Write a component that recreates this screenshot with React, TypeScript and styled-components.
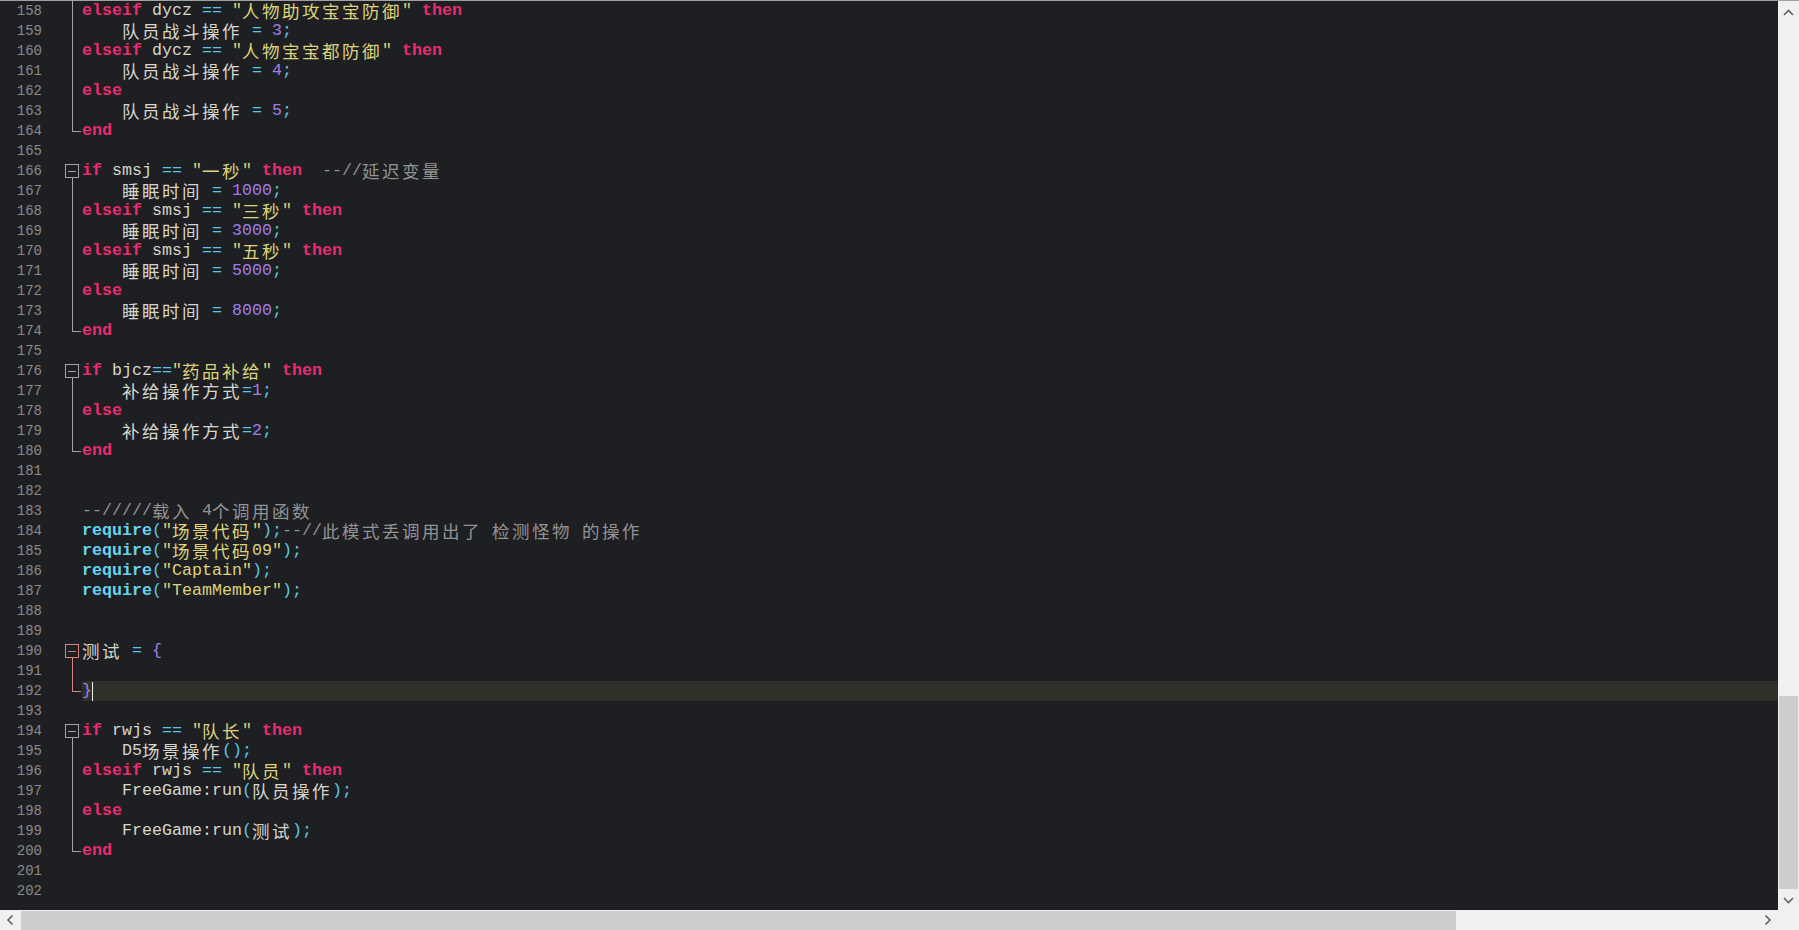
import React from "react";
import styled, { createGlobalStyle, css } from "styled-components";

type Kind = "kw" | "id" | "op" | "num" | "str" | "cm" | "fn" | "br";
type Tok = [Kind, string];
type Fold = "none" | "start" | "mid" | "end";

interface line {
    n: number,
    fold: Fold,
    red?: boolean,
    active?: boolean,
    toks: Tok[],
}

const colors: Record<Kind, string> = {
    kw: "#ec2a6d",
    id: "#d6d6cc",
    op: "#59c7e3",
    num: "#a07ee8",
    str: "#ddd37c",
    cm: "#939393",
    fn: "#66d3ef",
    br: "#9b7ee6",
};

const lines: line[] = [
    { n: 158, fold: "mid", toks: [["kw", "elseif"], ["id", " dycz "], ["op", "=="], ["id", " "], ["str", "\"人物助攻宝宝防御\""], ["id", " "], ["kw", "then"]] },
    { n: 159, fold: "mid", toks: [["id", "    队员战斗操作 "], ["op", "="], ["id", " "], ["num", "3"], ["op", ";"]] },
    { n: 160, fold: "mid", toks: [["kw", "elseif"], ["id", " dycz "], ["op", "=="], ["id", " "], ["str", "\"人物宝宝都防御\""], ["id", " "], ["kw", "then"]] },
    { n: 161, fold: "mid", toks: [["id", "    队员战斗操作 "], ["op", "="], ["id", " "], ["num", "4"], ["op", ";"]] },
    { n: 162, fold: "mid", toks: [["kw", "else"]] },
    { n: 163, fold: "mid", toks: [["id", "    队员战斗操作 "], ["op", "="], ["id", " "], ["num", "5"], ["op", ";"]] },
    { n: 164, fold: "end", toks: [["kw", "end"]] },
    { n: 165, fold: "none", toks: [] },
    { n: 166, fold: "start", toks: [["kw", "if"], ["id", " smsj "], ["op", "=="], ["id", " "], ["str", "\"一秒\""], ["id", " "], ["kw", "then"], ["id", "  "], ["cm", "--//延迟变量"]] },
    { n: 167, fold: "mid", toks: [["id", "    睡眠时间 "], ["op", "="], ["id", " "], ["num", "1000"], ["op", ";"]] },
    { n: 168, fold: "mid", toks: [["kw", "elseif"], ["id", " smsj "], ["op", "=="], ["id", " "], ["str", "\"三秒\""], ["id", " "], ["kw", "then"]] },
    { n: 169, fold: "mid", toks: [["id", "    睡眠时间 "], ["op", "="], ["id", " "], ["num", "3000"], ["op", ";"]] },
    { n: 170, fold: "mid", toks: [["kw", "elseif"], ["id", " smsj "], ["op", "=="], ["id", " "], ["str", "\"五秒\""], ["id", " "], ["kw", "then"]] },
    { n: 171, fold: "mid", toks: [["id", "    睡眠时间 "], ["op", "="], ["id", " "], ["num", "5000"], ["op", ";"]] },
    { n: 172, fold: "mid", toks: [["kw", "else"]] },
    { n: 173, fold: "mid", toks: [["id", "    睡眠时间 "], ["op", "="], ["id", " "], ["num", "8000"], ["op", ";"]] },
    { n: 174, fold: "end", toks: [["kw", "end"]] },
    { n: 175, fold: "none", toks: [] },
    { n: 176, fold: "start", toks: [["kw", "if"], ["id", " bjcz"], ["op", "=="], ["str", "\"药品补给\""], ["id", " "], ["kw", "then"]] },
    { n: 177, fold: "mid", toks: [["id", "    补给操作方式"], ["op", "="], ["num", "1"], ["op", ";"]] },
    { n: 178, fold: "mid", toks: [["kw", "else"]] },
    { n: 179, fold: "mid", toks: [["id", "    补给操作方式"], ["op", "="], ["num", "2"], ["op", ";"]] },
    { n: 180, fold: "end", toks: [["kw", "end"]] },
    { n: 181, fold: "none", toks: [] },
    { n: 182, fold: "none", toks: [] },
    { n: 183, fold: "none", toks: [["cm", "--/////载入 4个调用函数"]] },
    { n: 184, fold: "none", toks: [["fn", "require"], ["op", "("], ["str", "\"场景代码\""], ["op", ");"], ["cm", "--//此模式丢调用出了 检测怪物 的操作"]] },
    { n: 185, fold: "none", toks: [["fn", "require"], ["op", "("], ["str", "\"场景代码09\""], ["op", ");"]] },
    { n: 186, fold: "none", toks: [["fn", "require"], ["op", "("], ["str", "\"Captain\""], ["op", ");"]] },
    { n: 187, fold: "none", toks: [["fn", "require"], ["op", "("], ["str", "\"TeamMember\""], ["op", ");"]] },
    { n: 188, fold: "none", toks: [] },
    { n: 189, fold: "none", toks: [] },
    { n: 190, fold: "start", red: true, toks: [["id", "测试 "], ["op", "="], ["id", " "], ["br", "{"]] },
    { n: 191, fold: "mid", red: true, toks: [] },
    { n: 192, fold: "end", red: true, active: true, toks: [["br", "}"]] },
    { n: 193, fold: "none", toks: [] },
    { n: 194, fold: "start", toks: [["kw", "if"], ["id", " rwjs "], ["op", "=="], ["id", " "], ["str", "\"队长\""], ["id", " "], ["kw", "then"]] },
    { n: 195, fold: "mid", toks: [["id", "    D5场景操作"], ["op", "();"]] },
    { n: 196, fold: "mid", toks: [["kw", "elseif"], ["id", " rwjs "], ["op", "=="], ["id", " "], ["str", "\"队员\""], ["id", " "], ["kw", "then"]] },
    { n: 197, fold: "mid", toks: [["id", "    FreeGame:run"], ["op", "("], ["id", "队员操作"], ["op", ");"]] },
    { n: 198, fold: "mid", toks: [["kw", "else"]] },
    { n: 199, fold: "mid", toks: [["id", "    FreeGame:run"], ["op", "("], ["id", "测试"], ["op", ");"]] },
    { n: 200, fold: "end", toks: [["kw", "end"]] },
    { n: 201, fold: "none", toks: [] },
    { n: 202, fold: "none", toks: [] },
];

// han chars get a double-width cell, like the editor's fixed grid
const hanRe = /([\u3000-\u9fff\uff00-\uffef]+)/;
const withHan = (text: string) =>
    text.split(hanRe).map((part, i) =>
        i % 2 === 1 ? <Han key={i}>{part}</Han> : part
    );

const FoldMark = ({ fold, red }: { fold: Fold, red?: boolean }) => {
    const c = red ? "#d9827f" : "#a3a3a3";
    return (
        <svg width="40" height="20" viewBox="0 0 40 20">
            {fold === "start" && (
                <>
                    <rect x="23.5" y="3.5" width="13" height="13" fill="none" stroke={c} />
                    <line x1="26" y1="10.5" x2="34" y2="10.5" stroke={c} />
                    <line x1="30.5" y1="17" x2="30.5" y2="20" stroke={c} />
                </>
            )}
            {fold === "mid" && <line x1="30.5" y1="0" x2="30.5" y2="20" stroke={c} />}
            {fold === "end" && (
                <>
                    <line x1="30.5" y1="0" x2="30.5" y2="11" stroke={c} />
                    <line x1="30" y1="10.5" x2="39" y2="10.5" stroke={c} />
                </>
            )}
        </svg>
    );
};

const Arrow = ({ dir }: { dir: "up" | "down" | "left" | "right" }) => {
    const pts = {
        up: "6,13 10.5,8.5 15,13",
        down: "6,8 10.5,12.5 15,8",
        left: "12.5,5.5 8,10 12.5,14.5",
        right: "8.5,5.5 13,10 8.5,14.5",
    }[dir];
    return (
        <svg width="21" height="20" viewBox="0 0 21 20">
            <polyline points={pts} fill="none" stroke="#606060" strokeWidth="1.6" />
        </svg>
    );
};

const App = () => {
    return (
        <>
            <GlobalStyle />
            <Frame>
                <Editor>
                    {lines.map(l => (
                        <Row key={l.n}>
                            <LineNo>{l.n}</LineNo>
                            <FoldCell><FoldMark fold={l.fold} red={l.red} /></FoldCell>
                            <Code $active={l.active}>
                                {l.toks.map(([k, t], i) => (
                                    <Tok key={i} $kind={k}>{withHan(t)}</Tok>
                                ))}
                                {l.active && <Caret />}
                            </Code>
                        </Row>
                    ))}
                </Editor>
                <VScroll>
                    <ArrowBtn><Arrow dir="up" /></ArrowBtn>
                    <VTrack><VThumb /></VTrack>
                    <ArrowBtn><Arrow dir="down" /></ArrowBtn>
                </VScroll>
                <HScroll>
                    <ArrowBtn><Arrow dir="left" /></ArrowBtn>
                    <HTrack><HThumb /></HTrack>
                    <ArrowBtn><Arrow dir="right" /></ArrowBtn>
                </HScroll>
                <Corner />
            </Frame>
        </>
    );
};

const GlobalStyle = createGlobalStyle`
    html, body {
        margin: 0;
        padding: 0;
        background: #1e1f22;
        overflow: hidden;
    }
`;

const Frame = styled.div`
    width: 1799px;
    height: 930px;
    box-sizing: border-box;
    border-top: 1px solid #a0a0a0;
    display: grid;
    grid-template-columns: 1fr 21px;
    grid-template-rows: 1fr 20px;
    background: #1e1f22;
`;

const Editor = styled.div`
    overflow: hidden;
    display: flex;
    flex-direction: column;
    background: #1e1f22;
`;

const Row = styled.div`
    display: flex;
    height: 20px;
    flex-shrink: 0;
`;

const LineNo = styled.div`
    width: 42px;
    text-align: right;
    font-family: "Liberation Mono", "Courier New", monospace;
    font-size: 14px;
    line-height: 20px;
    color: #8a8a8a;
`;

const FoldCell = styled.div`
    width: 40px;
    height: 20px;
    svg { display: block; }
`;

const Code = styled.div<{ $active?: boolean }>`
    flex: 1;
    height: 20px;
    white-space: pre;
    font-family: "Liberation Mono", "Courier New", monospace;
    font-size: 16.67px;
    line-height: 20px;
    background: ${p => (p.$active ? "#2f3129" : "transparent")};
`;

const Tok = styled.span<{ $kind: Kind }>`
    color: ${p => colors[p.$kind]};
    ${p => (p.$kind === "kw" || p.$kind === "fn") && css`font-weight: bold;`}
`;

const Han = styled.span`
    display: inline-block;
    vertical-align: top;
    height: 20px;
    font-family: "Noto Sans CJK SC", sans-serif;
    font-size: 17.5px;
    letter-spacing: 2.5px;
    line-height: 20px;
    font-weight: normal;
`;

const Caret = styled.span`
    display: inline-block;
    vertical-align: top;
    width: 0;
    height: 19px;
    margin-top: 1px;
    border-left: 1px solid #f0f0f0;
`;

const VScroll = styled.div`
    display: flex;
    flex-direction: column;
    background: #f0f0f0;
`;

const ArrowBtn = styled.div`
    width: 21px;
    height: 21px;
    flex-shrink: 0;
    display: flex;
    align-items: center;
    justify-content: center;
    svg { display: block; }
`;

const VTrack = styled.div`
    flex: 1;
    display: flex;
    flex-direction: column;
    justify-content: flex-end;
`;

const VThumb = styled.div`
    height: 193px;
    margin: 0 1px;
    background: #cdcdcd;
`;

const HScroll = styled.div`
    display: flex;
    align-items: center;
    height: 20px;
    background: #f0f0f0;
    ${ArrowBtn} { height: 20px; }
`;

const HTrack = styled.div`
    flex: 1;
    height: 20px;
    display: flex;
`;

const HThumb = styled.div`
    width: 1435px;
    height: 19px;
    margin-top: 1px;
    background: #cdcdcd;
`;

const Corner = styled.div`
    background: #f0f0f0;
`;

export default App
